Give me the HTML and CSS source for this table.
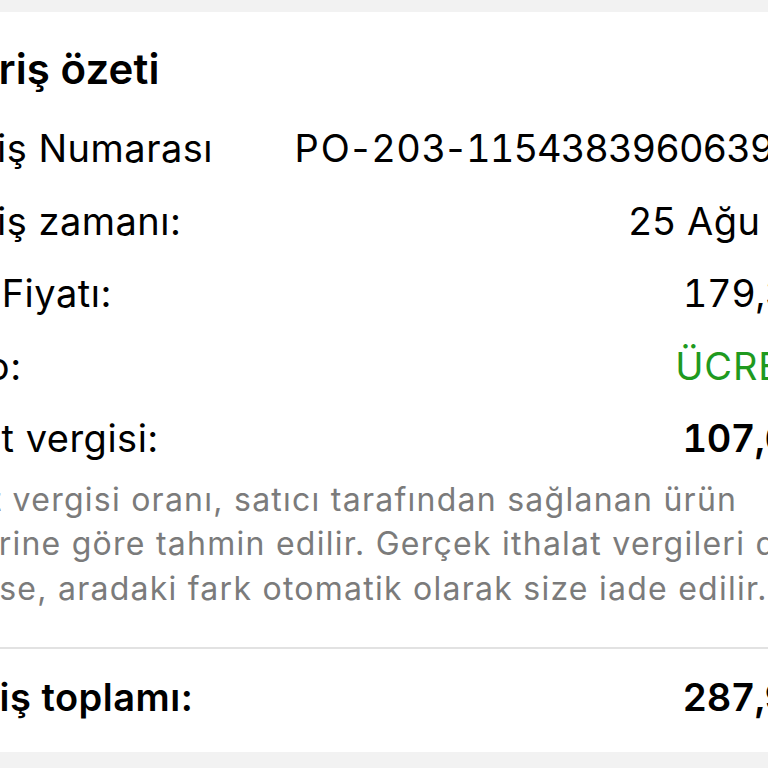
FILE: index.html
```html
<!DOCTYPE html>
<html lang="tr">
<head>
<meta charset="utf-8">
<title>Sipariş özeti</title>
<link rel="stylesheet" href="styles.css">
</head>
<body>
<main class="card">
  <h1 class="title">Sipariş özeti</h1>
  <div class="rows">
    <div class="row"><span class="label">Sipariş Numarası</span><span class="value value-id">PO-<span class="num num-short">203</span>-<span class="num">11543839606395221</span></span></div>
    <div class="row"><span class="label">Sipariş zamanı:</span><span class="value value-date">25 Ağu 2024</span></div>
    <div class="row"><span class="label">Ürün Fiyatı:</span><span class="value value-price">179,35 TL</span></div>
    <div class="row"><span class="label">Kargo:</span><span class="value value-free">ÜCRETSİZ</span></div>
    <div class="row"><span class="label">İthalat vergisi:</span><span class="value value-price value-strong">107,61 TL</span></div>
  </div>
  <p class="note">İthalat vergisi oranı, satıcı tarafından sağlanan ürün<br>bilgilerine göre tahmin edilir. Gerçek ithalat vergileri daha<br>düşükse, aradaki fark otomatik olarak size iade edilir.</p>
  <div class="divider"></div>
  <div class="row row-total"><span class="label">Sipariş toplamı:</span><span class="value value-price value-strong">287,96 TL</span></div>
</main>
</body>
</html>
```
FILE: styles.css
```css
html, body {
  margin: 0;
  padding: 0;
  height: 768px;
  overflow: hidden;
  background: #f2f2f2;
}

body {
  font-family: Inter, "Noto Sans", "Liberation Sans", sans-serif;
  color: #000;
}

.card {
  background: #fff;
  margin: 12px -140px 0 -120px;
  padding: 32px 40px 0 21px;
  height: 708px;
  white-space: nowrap;
}

.title {
  margin: 0 0 0 8px;
  font-size: 42px;
  line-height: 50px;
  font-weight: 600;
  letter-spacing: 0.1px;
}

.rows {
  margin-top: 18px;
}

.row {
  display: flex;
  justify-content: space-between;
  align-items: baseline;
  font-size: 38px;
  line-height: 72.5px;
}

.label {
  font-weight: 400;
  letter-spacing: 0.5px;
}

.value {
  text-align: right;
  letter-spacing: 0;
}

.value-id {
  letter-spacing: 2px;
}

.value-id .num {
  font-variant-numeric: tabular-nums;
  letter-spacing: -1px;
}

.value-id .num-short {
  letter-spacing: 0.5px;
}

.value-date {
  letter-spacing: 0.5px;
}

.value-price {
  font-variant-numeric: tabular-nums;
  letter-spacing: -0.5px;
}

.value-free {
  color: #1f9a1f;
  letter-spacing: 0.8px;
}

.value-strong {
  font-weight: 600;
}

.note {
  margin: 3px 0 0 0;
  font-size: 32px;
  line-height: 44.5px;
  letter-spacing: 1.25px;
  color: #7b7b7b;
}

.divider {
  height: 2px;
  background: #e2e2e2;
  margin: 36px -30px 0 -30px;
}

.row-total {
  margin-top: 12px;
}

.row-total .label {
  font-weight: 600;
}
```
